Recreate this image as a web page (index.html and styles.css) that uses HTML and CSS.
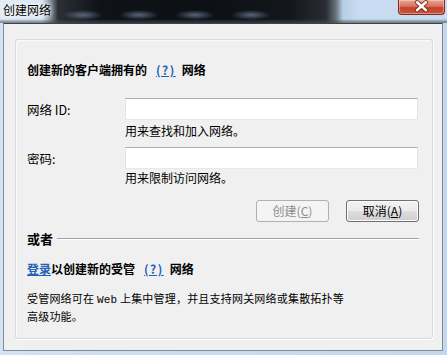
FILE: index.html
```html
<!DOCTYPE html>
<html lang="zh-CN">
<head>
<meta charset="utf-8">
<title>创建网络</title>
<link rel="stylesheet" href="styles.css">
</head>
<body>
<div class="window">
  <div class="titlebar">
    <span class="title">创建网络</span>
    <button class="close" aria-label="关闭">
      <svg width="47" height="15" viewBox="0 0 47 15">
        <path d="M19.5 3.2 L28.5 11.2 M28.5 3.2 L19.5 11.2" stroke="#6a2418" stroke-width="4.6" stroke-linecap="round" fill="none" opacity="0.75"/>
        <path d="M19.5 3.2 L28.5 11.2 M28.5 3.2 L19.5 11.2" stroke="#ffffff" stroke-width="2.6" stroke-linecap="round" fill="none"/>
      </svg>
    </button>
  </div>
  <div class="client">
    <div class="panel">
      <div class="heading">创建新的客户端拥有的<a class="link q">(?)</a>网络</div>
      <div class="field first">
        <label class="label">网络 ID:</label>
        <input class="input" type="text">
      </div>
      <div class="hint">用来查找和加入网络。</div>
      <div class="field second">
        <label class="label">密码:</label>
        <input class="input" type="password">
      </div>
      <div class="hint hint2">用来限制访问网络。</div>
      <div class="buttons">
        <button class="btn disabled">创建(<u>C</u>)</button>
        <button class="btn">取消(<u>A</u>)</button>
      </div>
      <div class="or">
        <span class="or-text">或者</span>
        <span class="rule"></span>
      </div>
      <div class="login"><a class="link">登录</a>以创建新的受管<a class="link q">(?)</a>网络</div>
      <p class="desc">受管网络可在 <span class="mono">Web</span> 上集中管理，并且支持网关网络或集散拓扑等<br>高级功能。</p>
    </div>
  </div>
</div>
</body>
</html>
```

FILE: styles.css
```css
* { box-sizing: border-box; }

html, body {
  margin: 0;
  padding: 0;
}

body {
  width: 447px;
  height: 355px;
  overflow: hidden;
  background: #c9dcf1;
  font-family: "Noto Sans CJK SC", "Noto Sans", sans-serif;
  font-size: 12px;
  color: #000;
}

.window {
  width: 447px;
  height: 355px;
  display: flex;
  flex-direction: column;
  background: linear-gradient(to right, #d4e2f2 0, #c9dcf1 50%, #c3d7ee 100%);
}

.titlebar {
  height: 23px;
  flex: none;
  display: flex;
  align-items: flex-start;
  background:
    radial-gradient(ellipse 20px 5px at 83px 15px, rgba(105,120,145,0.8), rgba(105,120,145,0) 100%),
    radial-gradient(ellipse 20px 5px at 139px 15px, rgba(105,120,145,0.8), rgba(105,120,145,0) 100%),
    radial-gradient(ellipse 20px 5px at 195px 15px, rgba(105,120,145,0.8), rgba(105,120,145,0) 100%),
    radial-gradient(ellipse 20px 5px at 251px 15px, rgba(105,120,145,0.8), rgba(105,120,145,0) 100%),
    linear-gradient(to bottom, rgba(60,64,70,0) 0, rgba(60,64,70,0) 19px, rgba(70,74,80,0.6) 22px),
    linear-gradient(to right, #e3ecf6 0, #d9e6f3 42px, #8a929b 50px, #2b3036 58px, #0f1318 100px, #0c0f14 200px, #13171c 290px, #2a2e34 326px, #6b737c 336px, #b9cfe8 343px, #c8dbf0 360px, #c8dbf0 100%);
}

.title {
  margin: 2px 0 0 3px;
  font-size: 12px;
  line-height: 16px;
  color: #000;
  text-shadow: 0 0 6px #fff, 0 0 3px #fff;
}

.close {
  margin: 0 2px 0 auto;
  width: 47px;
  height: 15px;
  padding: 0;
  border: 1px solid #7a2c20;
  border-top: none;
  border-radius: 0 0 4px 4px;
  background: linear-gradient(to bottom, #e9a696 0, #d7715c 45%, #c2432b 55%, #c9553b 100%);
  box-shadow: inset 0 0 0 1px rgba(255,220,210,0.45);
  display: flex;
  overflow: hidden;
}

.close svg { display: block; margin: -1px 0 0 -1px; }

.client {
  margin: 0 4px 0 3px;
  height: 328px;
  flex: none;
  border: 1px solid #7c8a99;
  border-top-color: #3d4248;
  background: #f0f0f0;
  padding: 15px 9px 11px 11px;
  display: flex;
}

.panel {
  flex: 1;
  height: 300px;
  border: 1px solid #dadada;
  border-radius: 3px;
  box-shadow: inset 1px 1px 0 #fafafa, 1px 1px 0 #ffffff;
  background: #f0f0f0;
  padding: 0 13px 0 11px;
  display: flex;
  flex-direction: column;
}

.heading {
  margin-top: 22px;
  line-height: 16px;
  font-weight: 700;
  font-size: 12px;
  white-space: nowrap;
}

.link {
  color: #1f63b8;
  text-decoration: underline;
  cursor: pointer;
}

.q {
  display: inline-block;
  margin: 0 6px 0 9px;
  letter-spacing: 1.5px;
  text-underline-offset: 1px;
}

.field {
  display: grid;
  grid-template-columns: 98px 293px;
  align-items: center;
}

.field.first { margin-top: 20px; }
.field.second { margin-top: 8px; }

.label {
  font-size: 12.5px;
  line-height: 16px;
  padding-top: 2px;
}

.input {
  width: 293px;
  height: 22px;
  margin: 0;
  border: 1px solid #e2e3ea;
  border-top-color: #abadb3;
  border-bottom-color: #e3e9ef;
  background: #fff;
  font: inherit;
  padding: 0 3px;
}

.hint {
  margin-top: 3px;
  padding-left: 98px;
  line-height: 16px;
  font-size: 12px;
}

.hint2 { margin-top: 1px; }

.buttons {
  margin-top: 14px;
  display: flex;
  justify-content: flex-end;
  gap: 17px;
}

.btn {
  width: 73px;
  height: 22px;
  margin: 0;
  padding: 0;
  border: 1px solid #707070;
  border-radius: 3px;
  background: linear-gradient(to bottom, #f2f2f2 0, #ebebeb 50%, #dddddd 51%, #cfcfcf 100%);
  box-shadow: inset 0 0 0 1px #fcfcfc;
  font: inherit;
  font-size: 12px;
  line-height: 18px;
  color: #000;
}

.btn u { text-underline-offset: 1px; }

.btn.disabled {
  border-color: #adb2b5;
  background: #f4f4f4;
  box-shadow: none;
  color: #8d8d8d;
}

.or {
  margin-top: 8px;
  height: 18px;
  display: flex;
  align-items: center;
  gap: 4px;
}

.or-text {
  font-size: 13px;
  font-weight: 700;
  line-height: 18px;
}

.rule {
  flex: 1;
  height: 2px;
  border-top: 1px solid #a0a0a0;
  border-bottom: 1px solid #ffffff;
  margin-top: -1px;
}

.login {
  margin-top: 13px;
  line-height: 16px;
  font-weight: 700;
  font-size: 12px;
  white-space: nowrap;
}

.desc {
  margin: 13px 0 0;
  font-size: 11px;
  line-height: 16px;
  white-space: nowrap;
  letter-spacing: 0.2px;
}

.mono {
  font-family: "Liberation Mono", monospace;
  font-size: 11px;
}
```
